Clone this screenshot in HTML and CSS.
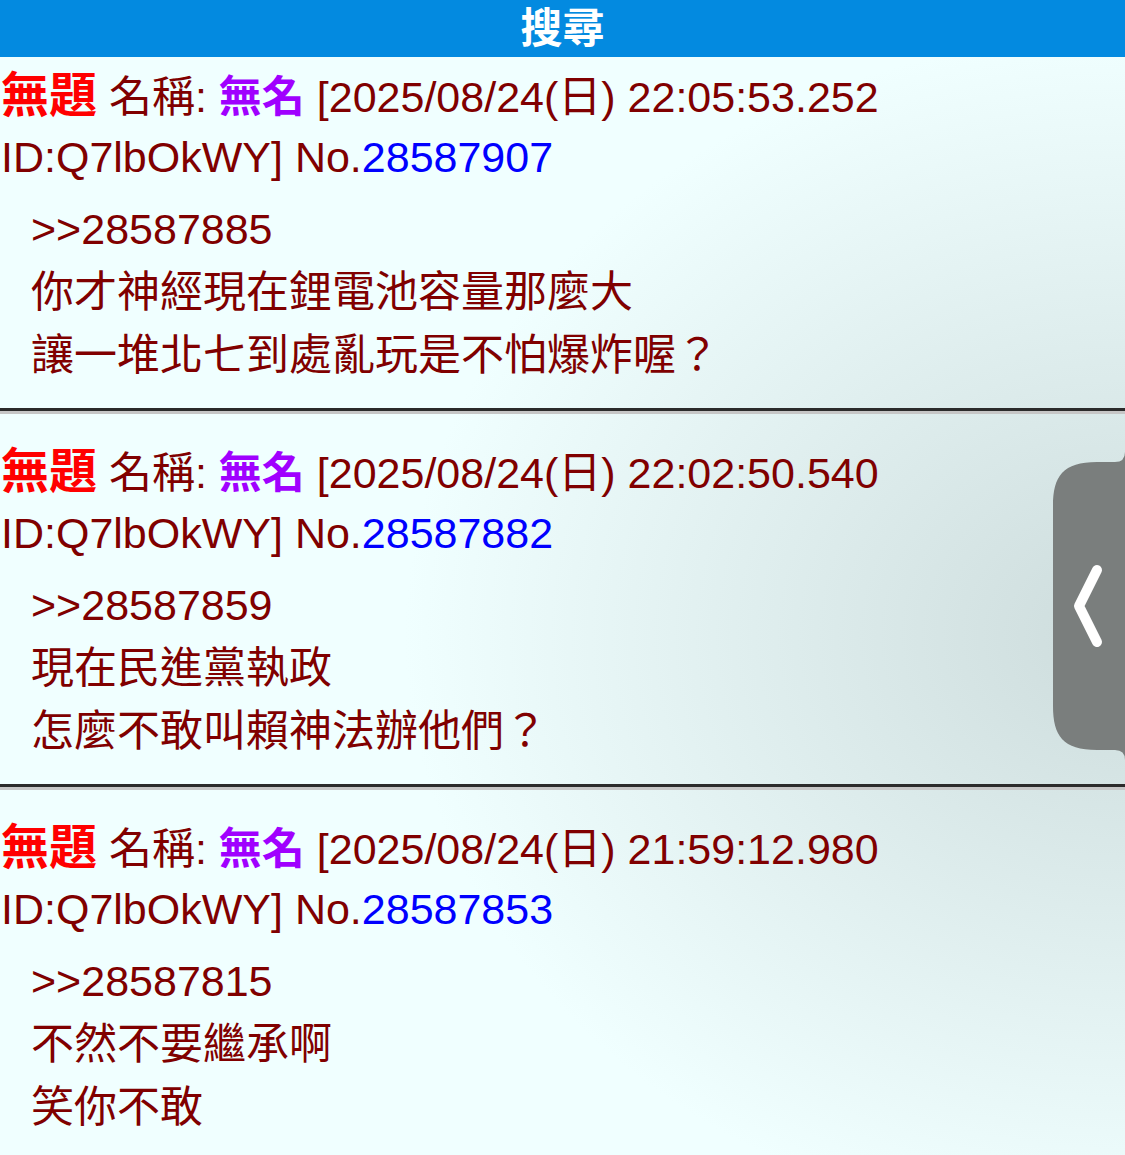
FILE: index.html
```html
<!DOCTYPE html>
<html lang="zh-Hant">
<head>
    <meta charset="UTF-8">
    <meta name="viewport" content="width=device-width, initial-scale=1.0">
    <title>搜尋</title>
    <link rel="stylesheet" href="styles.css">
</head>
<body>
    <div class="topbar">搜尋</div>

    <div class="threads">
        <!-- Search results -->
        <div class="reply">
            <div class="post-head">
                <span class="title">無題</span> 名稱: <span class="name">無名</span> [2025/08/24(日) 22:05:53.252 ID:Q7lbOkWY] No.<a class="qlink" href="#">28587907</a>
            </div>
            <div class="post-body">
                &gt;&gt;28587885<br>
                你才神經現在鋰電池容量那麼大<br>
                讓一堆北七到處亂玩是不怕爆炸喔？
            </div>
            <hr>
        </div>

        <div class="reply">
            <div class="post-head">
                <span class="title">無題</span> 名稱: <span class="name">無名</span> [2025/08/24(日) 22:02:50.540 ID:Q7lbOkWY] No.<a class="qlink" href="#">28587882</a>
            </div>
            <div class="post-body">
                &gt;&gt;28587859<br>
                現在民進黨執政<br>
                怎麼不敢叫賴神法辦他們？
            </div>
            <hr>
        </div>

        <div class="reply">
            <div class="post-head">
                <span class="title">無題</span> 名稱: <span class="name">無名</span> [2025/08/24(日) 21:59:12.980 ID:Q7lbOkWY] No.<a class="qlink" href="#">28587853</a>
            </div>
            <div class="post-body">
                &gt;&gt;28587815<br>
                不然不要繼承啊<br>
                笑你不敢
            </div>
            <hr>
        </div>
    </div>

    <!-- Side drawer handle -->
    <div class="side-tab">
        <svg width="72" height="308" viewBox="0 0 72 308">
            <path d="M72,0 Q72,10 62,10 L44,10 C10,10 0,24 0,54 L0,254 C0,284 10,298 44,298 L62,298 Q72,298 72,308 Z" fill="#7a7e7d"/>
            <path d="M44,118 L26,154 L44,190" fill="none" stroke="#fff" stroke-width="10" stroke-linecap="round" stroke-linejoin="round"/>
        </svg>
    </div>
</body>
</html>
```

FILE: styles.css
```css
body {
    font-family: 'Liberation Sans', 'Noto Sans CJK TC', sans-serif;
    margin: 0;
    color: #800000;
    background: radial-gradient(ellipse 720px 600px at 100% 55%, #cddcdc, #f0ffff) fixed;
    background-color: #f0ffff;
    min-height: 1155px;
}

/* Top bar */
.topbar {
    background-color: #038ae0;
    color: white;
    height: 57px;
    line-height: 57px;
    text-align: center;
    font-size: 42px;
    font-weight: bold;
}

/* Posts */
.reply {
    padding: 9px 0 19px;
}

.post-head {
    font-size: 43px;
    line-height: 60px;
    padding-left: 1px;
}

.title {
    color: #ff0000;
    font-weight: bold;
    font-size: 48px;
    line-height: 60px;
}

.name {
    color: #a000ff;
    font-weight: bold;
}

.qlink {
    color: #0000ff;
    text-decoration: none;
}

.post-body {
    font-size: 43px;
    line-height: 63px;
    margin: 11px 0 0 31px;
}

hr {
    margin: 21px 0 0;
    height: 0;
    border: none;
    border-top: 3px solid #2b2b2b;
    border-bottom: 3px solid #c6c6c6;
}

/* Drawer handle */
.side-tab {
    position: fixed;
    right: 0;
    top: 452px;
    width: 72px;
    height: 308px;
}

.side-tab svg {
    display: block;
}
```
